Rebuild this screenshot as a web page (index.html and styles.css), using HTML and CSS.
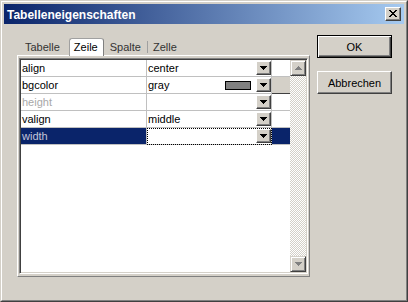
FILE: index.html
```html
<!DOCTYPE html>
<html lang="de">

<head>
    <meta charset="UTF-8">
    <title>Tabelleneigenschaften</title>
    <link rel="stylesheet" href="styles.css">
</head>

<body>
    <div class="window">
        <div class="frame">
            <div class="titlebar">
                <span class="title">Tabelleneigenschaften</span>
                <span class="close">
                    <svg width="8" height="7" viewBox="0 0 8 7" shape-rendering="crispEdges">
                        <path d="M0 0h2v1h-2zM6 0h2v1h-2zM1 1h2v1h-2zM5 1h2v1h-2zM2 2h4v1h-4zM3 3h2v1h-2zM2 4h4v1h-4zM1 5h2v1h-2zM5 5h2v1h-2zM0 6h2v1h-2zM6 6h2v1h-2z" fill="#000"/>
                    </svg>
                </span>
            </div>

            <div class="content">
                <div class="sheet">
                    <div class="tabs">
                        <span class="tab first">Tabelle</span>
                        <span class="tab active">Zeile</span>
                        <span class="tab sep">Spalte</span>
                        <span class="tab">Zelle</span>
                    </div>

                    <div class="panel">
                        <div class="listbox">
                            <div class="grid">
                                <div class="row">
                                    <div class="cell name">align</div>
                                    <div class="cell value"><span class="text">center</span><span class="dd"><svg width="7" height="4" viewBox="0 0 7 4" shape-rendering="crispEdges"><path d="M0 0h7v1h-1v1h-1v1h-1v1h-1v-1h-1v-1h-1v-1h-1z" fill="#000"/></svg></span></div>
                                    <div class="cell extra"></div>
                                </div>
                                <div class="row">
                                    <div class="cell name">bgcolor</div>
                                    <div class="cell value"><span class="text">gray</span><span class="swatch"></span><span class="dd"><svg width="7" height="4" viewBox="0 0 7 4" shape-rendering="crispEdges"><path d="M0 0h7v1h-1v1h-1v1h-1v1h-1v-1h-1v-1h-1v-1h-1z" fill="#000"/></svg></span></div>
                                    <div class="cell extra pick"></div>
                                </div>
                                <div class="row unset">
                                    <div class="cell name">height</div>
                                    <div class="cell value"><span class="text"></span><span class="dd"><svg width="7" height="4" viewBox="0 0 7 4" shape-rendering="crispEdges"><path d="M0 0h7v1h-1v1h-1v1h-1v1h-1v-1h-1v-1h-1v-1h-1z" fill="#000"/></svg></span></div>
                                    <div class="cell extra"></div>
                                </div>
                                <div class="row">
                                    <div class="cell name">valign</div>
                                    <div class="cell value"><span class="text">middle</span><span class="dd"><svg width="7" height="4" viewBox="0 0 7 4" shape-rendering="crispEdges"><path d="M0 0h7v1h-1v1h-1v1h-1v1h-1v-1h-1v-1h-1v-1h-1z" fill="#000"/></svg></span></div>
                                    <div class="cell extra"></div>
                                </div>
                                <div class="row selected">
                                    <div class="cell name">width</div>
                                    <div class="cell value focus"><span class="text"></span><span class="dd"><svg width="7" height="4" viewBox="0 0 7 4" shape-rendering="crispEdges"><path d="M0 0h7v1h-1v1h-1v1h-1v1h-1v-1h-1v-1h-1v-1h-1z" fill="#000"/></svg></span></div>
                                    <div class="cell extra"></div>
                                </div>
                            </div>

                            <div class="scrollbar">
                                <div class="sb-btn">
                                    <svg width="7" height="4" viewBox="0 0 7 4" shape-rendering="crispEdges"><path d="M3 0h1v1h1v1h1v1h1v1h-7v-1h1v-1h1v-1h1z" fill="#808080"/></svg>
                                </div>
                                <div class="sb-track"></div>
                                <div class="sb-btn">
                                    <svg width="7" height="4" viewBox="0 0 7 4" shape-rendering="crispEdges"><path d="M0 0h7v1h-1v1h-1v1h-1v1h-1v-1h-1v-1h-1v-1h-1z" fill="#808080"/></svg>
                                </div>
                            </div>
                        </div>
                    </div>
                </div>

                <div class="buttons">
                    <button class="btn default">OK</button>
                    <button class="btn">Abbrechen</button>
                </div>
            </div>
        </div>
    </div>
</body>

</html>
```

FILE: styles.css
```css
body {
    margin: 0;
    font-family: "Liberation Sans", Arial, sans-serif;
    font-size: 11px;
    color: #000;
}

.window {
    width: 408px;
    height: 302px;
    box-sizing: border-box;
    border: 1px solid;
    border-color: #d4d0c8 #404040 #404040 #d4d0c8;
    background-color: #d4d0c8;
}

.frame {
    height: 100%;
    box-sizing: border-box;
    border: 1px solid;
    border-color: #fff #808080 #808080 #fff;
    padding: 2px;
}

/* title bar */
.titlebar {
    height: 20px;
    display: flex;
    align-items: center;
    padding: 0 3px 0 3px;
    background: linear-gradient(to right, #0a246a, #a6caf0);
}

.title {
    flex: 1;
    color: #fff;
    font-weight: bold;
    font-size: 12px;
    padding-top: 1px;
}

.close {
    width: 16px;
    height: 14px;
    box-sizing: border-box;
    display: flex;
    align-items: center;
    justify-content: center;
    background-color: #d4d0c8;
    border: 1px solid;
    border-color: #fff #404040 #404040 #fff;
    box-shadow: inset -1px -1px #808080;
}

.close svg {
    display: block;
    margin-top: -1px;
}

/* body */
.content {
    display: flex;
    gap: 7px;
    padding: 11px 12px 0 13px;
}

.sheet {
    width: 294px;
    margin-top: 3px;
}

.tabs {
    height: 17px;
    display: flex;
    align-items: flex-end;
}

.tab {
    padding: 0 5px;
    line-height: 15px;
    color: #333;
}

.tab.first {
    margin-left: 3px;
    margin-right: 4px;
}

.tab.active {
    position: relative;
    z-index: 1;
    height: 18px;
    box-sizing: border-box;
    margin-bottom: -1px;
    padding: 1px 5px 0 4px;
    background-color: #fff;
    border: 1px solid #a0a0a0;
    border-right-color: #808080;
    border-bottom: none;
    border-radius: 3px 3px 0 0;
    color: #000;
}

.tab.sep {
    padding: 0 6px;
    border-right: 1px solid #a0a0a0;
    line-height: 12px;
    margin-bottom: 2px;
}

.panel {
    height: 222px;
    box-sizing: border-box;
    border: 1px solid;
    border-color: #fff #808080 #808080 #fff;
    padding: 2px 1px 2px 1px;
}

.listbox {
    height: 216px;
    box-sizing: border-box;
    display: flex;
    border: 1px solid;
    border-color: #808080 #fff #fff #808080;
    box-shadow: inset 1px 1px #404040, inset -1px -1px #d4d0c8;
    padding: 1px;
    background-color: #fff;
}

.grid {
    width: 269px;
}

.row {
    display: grid;
    grid-template-columns: 126px 125px 18px;
    height: 17px;
}

.cell {
    box-sizing: border-box;
    border-bottom: 1px solid #c0c0c0;
    line-height: 16px;
    white-space: nowrap;
}

.name,
.value {
    border-right: 1px solid #c0c0c0;
}

.name {
    padding-left: 1px;
}

.value {
    display: flex;
    align-items: flex-start;
    padding-left: 1px;
}

.value .text {
    flex: 1;
}

.swatch {
    width: 26px;
    height: 9px;
    box-sizing: border-box;
    margin: 4px 5px 0 0;
    background-color: #808080;
    border: 1px solid #000;
}

.dd {
    width: 15px;
    height: 14px;
    box-sizing: border-box;
    margin: 1px 0 0 0;
    display: flex;
    align-items: center;
    justify-content: center;
    background-color: #d4d0c8;
    border: 1px solid;
    border-color: #fff #404040 #404040 #fff;
    box-shadow: inset -1px -1px #808080;
}

.pick {
    background-color: #d4d0c8;
    border-bottom-color: #404040;
}

.unset .name {
    color: #a8a8a8;
}

.selected .name,
.selected .extra {
    background-color: #0a246a;
    color: #c4c4d8;
}

.focus {
    outline: 1px dotted #000;
    outline-offset: -1px;
}

/* scrollbar */
.scrollbar {
    width: 16px;
    display: flex;
    flex-direction: column;
}

.sb-btn {
    height: 16px;
    box-sizing: border-box;
    display: flex;
    align-items: center;
    justify-content: center;
    background-color: #d4d0c8;
    border: 1px solid;
    border-color: #d4d0c8 #404040 #404040 #d4d0c8;
    box-shadow: inset 1px 1px #fff, inset -1px -1px #808080;
}

.sb-track {
    flex: 1;
    background: repeating-conic-gradient(#d4d0c8 0 25%, #fff 0 50%) 0 0 / 2px 2px;
}

/* dialog buttons */
.buttons {
    display: flex;
    flex-direction: column;
    gap: 13px;
}

.btn {
    width: 75px;
    height: 23px;
    box-sizing: border-box;
    font-family: "Liberation Sans", Arial, sans-serif;
    font-size: 11px;
    color: #000;
    background-color: #d4d0c8;
    border: 1px solid;
    border-color: #fff #404040 #404040 #fff;
    box-shadow: inset -1px -1px #808080;
    padding: 0;
}

.btn.default {
    border-color: #000;
    box-shadow: inset 1px 1px #fff, inset -1px -1px #404040, inset -2px -2px #808080;
}
```
